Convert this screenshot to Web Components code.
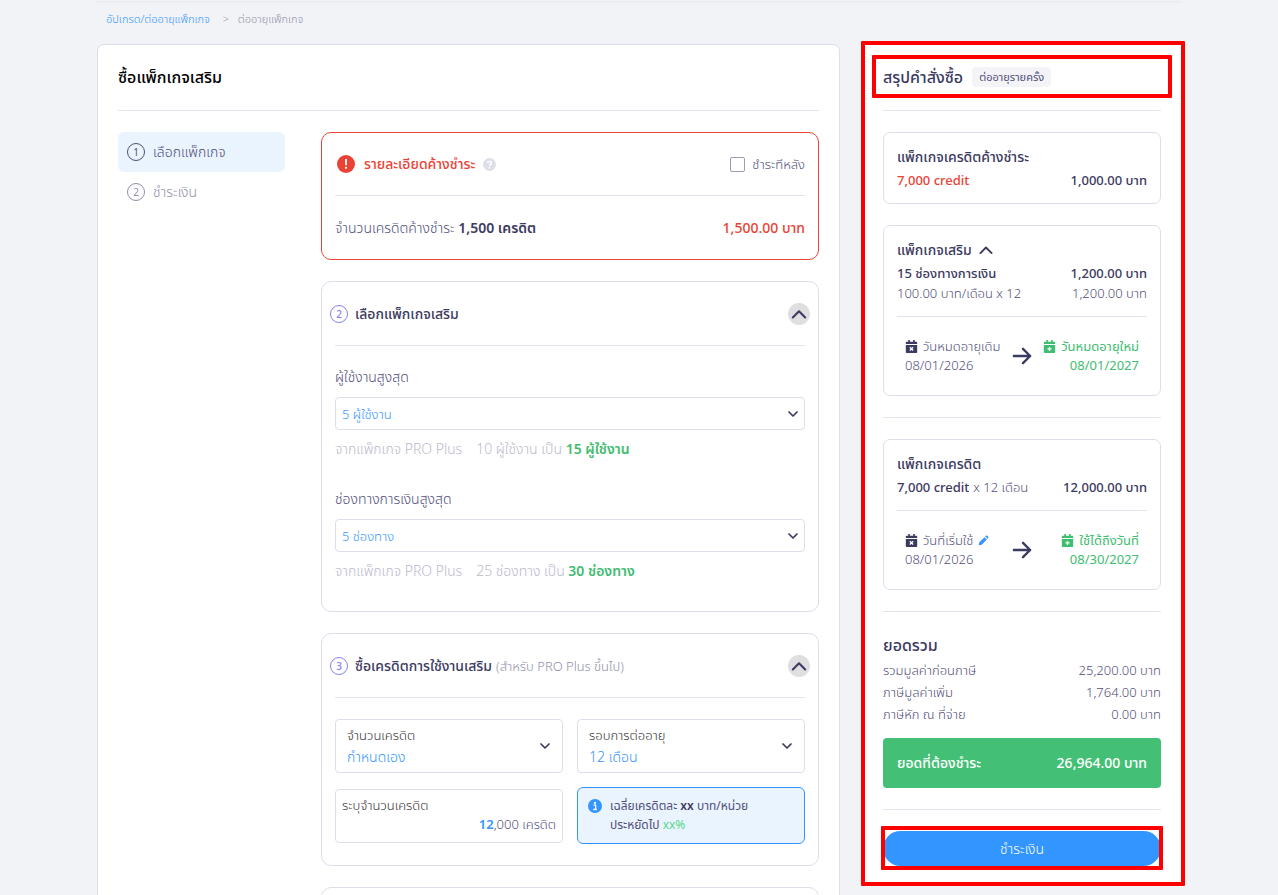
<!DOCTYPE html>
<html lang="th">
<head>
<meta charset="utf-8">
<meta name="viewport" content="width=device-width, initial-scale=1">
<title>ซื้อแพ็กเกจเสริม</title>
<style>
html {
    scrollbar-width: none;
}

body {
    --ink: #3b3a60;
    --soft: #504e78;
    --mute: #9190aa;
    --pale: #bbbacd;
    --line: #dedeea;
    --red: #ea4335;
    --green: #3fbd70;
    --blue: #3395ff;
    margin: 0;
    background: #f2f3f7;
    color: var(--soft);
    font: 300 13px/20px "Noto Sans", "Noto Sans Thai", sans-serif;
}

b {
    color: var(--ink);
    font-weight: 600;
}

.red { color: var(--red); }
.green { color: var(--green); }
b.red { font-weight: 500; }
</style>
</head>
<body>

<checkout-page>
    <crumb-trail slot="crumbs" parent="อัปเกรด/ต่ออายุแพ็กเกจ" current="ต่ออายุแพ็กเกจ"></crumb-trail>

    <main-panel heading="ซื้อแพ็กเกจเสริม">
        <step-item slot="steps" number="1" active>เลือกแพ็กเกจ</step-item>
        <step-item slot="steps" number="2">ชำระเงิน</step-item>

        <due-card heading="รายละเอียดค้างชำระ" option="ชำระทีหลัง">
            <span>จำนวนเครดิตค้างชำระ <b>1,500 เครดิต</b></span>
            <b class="red">1,500.00 บาท</b>
        </due-card>

        <section-card number="2" heading="เลือกแพ็กเกจเสริม">
            <select-field label="ผู้ใช้งานสูงสุด" value="5 ผู้ใช้งาน">
                <span>จากแพ็กเกจ PRO Plus</span>
                <span>10 ผู้ใช้งาน เป็น <b class="green">15 ผู้ใช้งาน</b></span>
            </select-field>
            <select-field label="ช่องทางการเงินสูงสุด" value="5 ช่องทาง">
                <span>จากแพ็กเกจ PRO Plus</span>
                <span>25 ช่องทาง เป็น <b class="green">30 ช่องทาง</b></span>
            </select-field>
        </section-card>

        <section-card number="3" heading="ซื้อเครดิตการใช้งานเสริม" note="(สำหรับ PRO Plus ขึ้นไป)">
            <credit-fields></credit-fields>
        </section-card>

        <section-card></section-card>
    </main-panel>

    <order-summary slot="side" heading="สรุปคำสั่งซื้อ" badge="ต่ออายุรายครั้ง">
        <summary-box heading="แพ็กเกจเครดิตค้างชำระ">
            <summary-line strong><span class="red">7,000 credit</span><span slot="amount">1,000.00 บาท</span></summary-line>
        </summary-box>

        <summary-box heading="แพ็กเกจเสริม" collapsible>
            <summary-line strong>15 ช่องทางการเงิน<span slot="amount">1,200.00 บาท</span></summary-line>
            <summary-line small>100.00 บาท/เดือน x 12<span slot="amount">1,200.00 บาท</span></summary-line>
            <date-range slot="dates" from-label="วันหมดอายุเดิม" from="08/01/2026" to-label="วันหมดอายุใหม่" to="08/01/2027"></date-range>
        </summary-box>

        <soft-rule></soft-rule>

        <summary-box heading="แพ็กเกจเครดิต">
            <summary-line strong>7,000 credit<span slot="note">x 12 เดือน</span><span slot="amount">12,000.00 บาท</span></summary-line>
            <date-range slot="dates" editable from-label="วันที่เริ่มใช้" from="08/01/2026" to-label="ใช้ได้ถึงวันที่" to="08/30/2027"></date-range>
        </summary-box>

        <soft-rule></soft-rule>

        <order-total heading="ยอดรวม" label="ยอดที่ต้องชำระ" amount="26,964.00 บาท">
            <summary-line>รวมมูลค่าก่อนภาษี<span slot="amount">25,200.00 บาท</span></summary-line>
            <summary-line>ภาษีมูลค่าเพิ่ม<span slot="amount">1,764.00 บาท</span></summary-line>
            <summary-line>ภาษีหัก ณ ที่จ่าย<span slot="amount">0.00 บาท</span></summary-line>
        </order-total>
    </order-summary>
</checkout-page>

<script>
const icons = {
    up: '<path d="M3.500 10.500l4.500-4.500 4.500 4.500" fill="none" stroke="currentColor" stroke-width="1.500" stroke-linecap="round" stroke-linejoin="round"/>',
    down: '<path d="M4 6l4 4 4-4" fill="none" stroke="currentColor" stroke-width="1.700" stroke-linecap="round" stroke-linejoin="round"/>',
    arrow: '<path d="M1.500 8h13M8.800 2.300L14.500 8l-5.700 5.700" fill="none" stroke="currentColor" stroke-width="1.900" stroke-linecap="round" stroke-linejoin="round"/>',
    alert: '<circle cx="8" cy="8" r="8" fill="currentColor"/><path d="M8 4.200v4.300" stroke="#fff" stroke-width="1.600" stroke-linecap="round"/><circle cx="8" cy="11.400" r="1" fill="#fff"/>',
    info: '<circle cx="8" cy="8" r="8" fill="currentColor"/><circle cx="8" cy="4.500" r="1.300" fill="#fff"/><path d="M6.200 7h2.500v4.500M6 12h4.200" fill="none" stroke="#fff" stroke-width="1.500"/>',
    help: '<circle cx="8" cy="8" r="8" fill="currentColor"/><path d="M5.700 6.200c.200-2.800 4.800-2.600 4.600.100C10.200 7.800 8 7.800 8 9.500" fill="none" stroke="#fff" stroke-width="1.700"/><circle cx="8" cy="12" r="1.100" fill="#fff"/>',
    pen: '<path d="M1 15l.900-4.300 7.600-7.600 3.400 3.400-7.600 7.600zM10.500 2.100l.900-.900c.600-.600 1.400-.600 2 0l1.400 1.400c.600.600.600 1.400 0 2l-.900.900z" fill="currentColor"/>',
    calx: '<path d="M4 0h2v2h4V0h2v2h2c.600 0 1 .400 1 1v2H1V3c0-.600.400-1 1-1h2zM1 6h14v9c0 .600-.400 1-1 1H2c-.600 0-1-.400-1-1z" fill="currentColor"/><path d="M6 9l4 4M10 9l-4 4" stroke="#fff" stroke-width="1.600"/>',
    calplus: '<path d="M4 0h2v2h4V0h2v2h2c.600 0 1 .400 1 1v2H1V3c0-.600.400-1 1-1h2zM1 6h14v9c0 .600-.400 1-1 1H2c-.600 0-1-.400-1-1z" fill="currentColor"/><path d="M8 8.500v5M5.500 11h5" stroke="#fff" stroke-width="1.600"/>'
};

// shared base: render() gives the markup of the shadow root
class BaseElement extends HTMLElement {
    constructor() {
        super();
        this.attachShadow({mode: 'open'});
    }

    connectedCallback() {
        const template = document.createElement('template');
        template.innerHTML = '<style>*{box-sizing:border-box}</style>' + this.render();
        this.shadowRoot.replaceChildren(template.content.cloneNode(true));
    }

    attr(name) {
        return this.getAttribute(name) || '';
    }
}

class AppIcon extends BaseElement {
    render() {
        return `
<style>
:host { display: inline-flex; flex: none; width: 16px; height: 16px; }
svg { width: 100%; height: 100%; }
</style>
<svg viewBox="0 0 16 16" aria-hidden="true">${icons[this.attr('name')]}</svg>`;
    }
}

class SoftRule extends BaseElement {
    render() {
        return `
<style>
:host { display: block; height: 1px; background: #e3e3ee; }
</style>`;
    }
}

// red frame drawn over the element that holds it
class MarkFrame extends BaseElement {
    render() {
        return `
<style>
:host { position: absolute; inset: -4px; border: 4px solid #f00; border-radius: 1px; pointer-events: none; }
</style>`;
    }
}

class CheckoutPage extends BaseElement {
    render() {
        return `
<style>
:host { display: block; max-width: 1084px; margin: 0 auto; }
.top { height: 1px; box-shadow: 0 0 3px rgba(60, 60, 90, .2); }
.columns { display: grid; grid-template-columns: 1fr 320px; gap: 21px; align-items: start; }
</style>
<div class="top"></div>
<slot name="crumbs"></slot>
<div class="columns">
    <slot></slot>
    <slot name="side"></slot>
</div>`;
    }
}

class CrumbTrail extends BaseElement {
    render() {
        return `
<style>
:host { display: block; padding: 8px 9px 15px; font-size: 11px; color: var(--mute); }
nav { display: flex; }
a { color: var(--blue); text-decoration: none; }
.sep { width: 28px; text-align: center; padding-left: 4px; }
</style>
<nav>
    <a href="#">${this.attr('parent')}</a>
    <span class="sep">&gt;</span>
    <span>${this.attr('current')}</span>
</nav>`;
    }
}

class MainPanel extends BaseElement {
    render() {
        return `
<style>
:host { display: block; box-sizing: border-box; background: #fff; border: 1px solid var(--line); border-radius: 7px; padding: 0 20px 20px; }
h1 { margin: 0; font-size: 16px; line-height: 65px; font-weight: 500; color: #000; }
.body { display: grid; grid-template-columns: 167px 1fr; gap: 36px; padding-top: 21px; }
.cards { display: grid; gap: 21px; }
</style>
<h1>${this.attr('heading')}</h1>
<soft-rule></soft-rule>
<div class="body">
    <div><slot name="steps"></slot></div>
    <div class="cards"><slot></slot></div>
</div>`;
    }
}

class StepItem extends BaseElement {
    render() {
        return `
<style>
:host { display: flex; align-items: center; gap: 8px; height: 40px; padding: 0 9px; border-radius: 6px; font-size: 14px; box-sizing: border-box; color: var(--mute); }
:host([active]) { background: #eaf4ff; color: var(--soft); }
.num { width: 18px; height: 18px; border: 1px solid; border-radius: 50%; font-size: 10px; line-height: 16px; font-weight: 400; text-align: center; }
</style>
<span class="num">${this.attr('number')}</span>
<slot></slot>`;
    }
}

class DueCard extends BaseElement {
    render() {
        return `
<style>
:host { display: block; border: 1px solid var(--red); border-radius: 10px; padding: 0 13px; }
header, .row { display: flex; align-items: center; height: 62px; }
.row { justify-content: space-between; height: 63px; font-size: 14px; }
header { padding-left: 2px; color: var(--red); }
header > app-icon { width: 18px; height: 18px; }
h2 { margin: 0 8px 0 9px; font-size: 14px; font-weight: 500; }
header > .help { width: 13px; height: 13px; color: var(--line); }
label { display: flex; align-items: center; gap: 7px; margin-left: auto; color: var(--soft); }
input { appearance: none; width: 15px; height: 15px; margin: 0; border: 1px solid #9c9bb3; border-radius: 2px; background: #fff; }
</style>
<header>
    <app-icon name="alert"></app-icon>
    <h2>${this.attr('heading')}</h2>
    <app-icon class="help" name="help"></app-icon>
    <label><input type="checkbox">${this.attr('option')}</label>
</header>
<soft-rule></soft-rule>
<div class="row"><slot></slot></div>`;
    }
}

class SectionCard extends BaseElement {
    render() {
        const header = this.hasAttribute('heading') ? `
<header>
    <span class="num">${this.attr('number')}</span>
    <h2>${this.attr('heading')}</h2>
    <span class="note">${this.attr('note')}</span>
    <button type="button" aria-label="ย่อ"><app-icon name="up"></app-icon></button>
</header>
<soft-rule></soft-rule>` : '';
        return `
<style>
:host { display: block; border: 1px solid var(--line); border-radius: 10px; padding: 0 13px 21px; }
header { display: flex; align-items: center; height: 63px; margin: 0 -5px; }
.num { width: 18px; height: 18px; border: 1px solid; border-radius: 50%; font-size: 10px; line-height: 16px; text-align: center; color: #8482f0; font-weight: 500; }
h2 { margin: 0 4px 0 7px; font-size: 14px; font-weight: 500; color: var(--ink); }
.note { color: var(--mute); }
button { display: grid; place-items: center; width: 22px; height: 22px; margin-left: auto; padding: 0; border: 0; border-radius: 50%; background: #dfdfe1; color: var(--ink); }
button app-icon { width: 22px; height: 22px; }
</style>
${header}
<slot></slot>`;
    }
}

class SelectField extends BaseElement {
    render() {
        return `
<style>
:host { display: block; padding: 20px 0 9px; }
label { display: block; font-size: 14px; line-height: 22px; margin-bottom: 9px; }
.box { display: grid; align-items: center; color: var(--ink); }
.box > * { grid-area: 1 / 1; }
.box app-icon { justify-self: end; margin-right: 4px; pointer-events: none; }
select { appearance: none; width: 100%; height: 33px; padding: 0 6px; border: 1px solid var(--line); border-radius: 4px; background: #fff; color: var(--blue); font: inherit; }
.hint { display: flex; gap: 14px; margin-top: 9px; font-size: 14px; color: var(--pale); }
</style>
<label for="field">${this.attr('label')}</label>
<div class="box">
    <select id="field"><option>${this.attr('value')}</option></select>
    <app-icon name="down"></app-icon>
</div>
<div class="hint"><slot></slot></div>`;
    }
}

class CreditFields extends BaseElement {
    render() {
        return `
<style>
:host { display: grid; grid-template-columns: 1fr 1fr; gap: 14px; padding-top: 21px; align-items: center; }
.field { display: flex; flex-direction: column; justify-content: center; height: 54px; border: 1px solid var(--line); border-radius: 4px; color: #333; line-height: 19px; }
.pick { display: grid; grid-template-columns: 1fr 16px; align-content: center; align-items: center; padding: 0 9px 0 11px; color: var(--ink); }
.pick label { color: #333; line-height: 22px; }
.pick select { grid-row: 2; grid-column: 1; }
.pick app-icon { grid-row: 1 / 3; grid-column: 2; }
select { appearance: none; border: 0; padding: 0; background: none; color: var(--blue); font: inherit; font-size: 14px; line-height: 22px; }
.amount { padding: 0 6px 2px; }
.amount div { display: flex; justify-content: flex-end; color: var(--soft); }
input { width: 60px; padding: 0; border: 0; text-align: right; font: inherit; font-weight: 600; color: var(--blue); }
.tip { display: flex; gap: 8px; min-height: 57px; padding: 8px 10px; border: 1px solid var(--blue); border-radius: 6px; background: #eaf4ff; font-size: 12px; font-weight: 400; line-height: 19px; }
.tip app-icon { width: 14px; height: 14px; margin-top: 3px; color: var(--blue); }
b { color: var(--ink); font-weight: 600; }
.ok { color: #58d68d; }
</style>
<div class="field pick">
    <label for="credit">จำนวนเครดิต</label>
    <select id="credit"><option>กำหนดเอง</option></select>
    <app-icon name="down"></app-icon>
</div>
<div class="field pick">
    <label for="cycle">รอบการต่ออายุ</label>
    <select id="cycle"><option>12 เดือน</option></select>
    <app-icon name="down"></app-icon>
</div>
<div class="field amount">
    <label for="amount">ระบุจำนวนเครดิต</label>
    <div><input id="amount" value="12"><span>,000 เครดิต</span></div>
</div>
<div class="tip">
    <app-icon name="info"></app-icon>
    <div>เฉลี่ยเครดิตละ <b>xx</b> บาท/หน่วย<br>ประหยัดไป <span class="ok">xx%</span></div>
</div>`;
    }
}

class OrderSummary extends BaseElement {
    render() {
        return `
<style>
:host { display: grid; gap: 21px; position: relative; box-sizing: border-box; padding: 0 20px 19px 22px; background: #fff; }
.outer { inset: -3px -4px -1px 0; }
.head { display: flex; align-items: center; gap: 9px; height: 66px; margin-bottom: -21px; position: relative; }
.head mark-frame { inset: 11px -11px 12px; }
h2 { margin: 0; font-size: 16px; font-weight: 500; color: var(--ink); }
.badge { padding: 0 7px; border-radius: 4px; background: #f4f4f8; font-size: 11px; font-weight: 400; }
.pay { position: relative; display: grid; }
.pay mark-frame { inset: -5px -2px -4px; }
button { height: 35px; border: 0; border-radius: 18px; background: var(--blue); color: #fff; font: inherit; font-size: 14px; }
</style>
<div class="head">
    <h2>${this.attr('heading')}</h2>
    <span class="badge">${this.attr('badge')}</span>
    <mark-frame></mark-frame>
</div>
<soft-rule></soft-rule>
<slot></slot>
<soft-rule></soft-rule>
<div class="pay">
    <button type="button">ชำระเงิน</button>
    <mark-frame></mark-frame>
</div>
<mark-frame class="outer"></mark-frame>`;
    }
}

class SummaryBox extends BaseElement {
    render() {
        const toggle = this.hasAttribute('collapsible')
            ? '<button type="button" aria-label="ย่อ"><app-icon name="up"></app-icon></button>' : '';
        return `
<style>
:host { display: block; border: 1px solid var(--line); border-radius: 7px; padding: 12px 13px; }
.head { display: flex; align-items: center; gap: 4px; height: 24px; }
h3 { margin: 0; font-size: 14px; font-weight: 500; color: var(--ink); }
button { display: flex; padding: 0; border: 0; background: none; color: var(--ink); }
button app-icon { width: 20px; height: 20px; }
</style>
<div class="head"><h3>${this.attr('heading')}</h3>${toggle}</div>
<slot></slot>
<slot name="dates"></slot>`;
    }
}

class SummaryLine extends BaseElement {
    render() {
        return `
<style>
:host { display: flex; line-height: 22px; }
:host([small]) { line-height: 18px; padding-bottom: 2px; }
:host([strong]) { color: var(--ink); font-weight: 500; }
slot[name="note"] { display: block; margin-left: 4px; color: var(--soft); font-weight: 300; }
slot[name="amount"] { display: block; margin-left: auto; }
</style>
<span><slot></slot></span>
<slot name="note"></slot>
<slot name="amount"></slot>`;
    }
}

class DateRange extends BaseElement {
    render() {
        const edit = this.hasAttribute('editable')
            ? '<button type="button" aria-label="แก้ไข"><app-icon name="pen"></app-icon></button>' : '';
        return `
<style>
:host { display: block; padding-top: 12px; line-height: 19px; }
.dates { display: grid; grid-template-columns: 1fr auto 1fr; align-items: center; padding: 20px 8px 8px; }
.title { display: flex; align-items: center; gap: 5px; white-space: nowrap; }
.title app-icon { width: 13px; height: 13px; }
.from .title > app-icon { color: var(--ink); }
.to { color: var(--green); text-align: right; font-weight: 400; }
.to .title { justify-content: flex-end; }
.arrow { width: 20px; height: 20px; color: var(--ink); }
button { display: flex; padding: 0; border: 0; background: none; color: var(--blue); }
.title button app-icon { width: 11px; height: 11px; }
</style>
<soft-rule></soft-rule>
<div class="dates">
    <div class="from">
        <div class="title"><app-icon name="calx"></app-icon>${this.attr('from-label')}${edit}</div>
        ${this.attr('from')}
    </div>
    <app-icon class="arrow" name="arrow"></app-icon>
    <div class="to">
        <div class="title"><app-icon name="calplus"></app-icon>${this.attr('to-label')}</div>
        ${this.attr('to')}
    </div>
</div>`;
    }
}

class OrderTotal extends BaseElement {
    render() {
        return `
<style>
:host { display: block; }
h3 { margin: 0 0 2px; font-size: 16px; line-height: 24px; font-weight: 500; color: var(--ink); }
.due { display: flex; justify-content: space-between; align-items: center; height: 50px; margin-top: 13px; padding: 0 14px; border-radius: 4px; background: #44bf76; color: #fff; font-size: 14px; font-weight: 500; }
</style>
<h3>${this.attr('heading')}</h3>
<slot></slot>
<div class="due"><span>${this.attr('label')}</span><span>${this.attr('amount')}</span></div>`;
    }
}

window.customElements.define('app-icon', AppIcon);
window.customElements.define('soft-rule', SoftRule);
window.customElements.define('mark-frame', MarkFrame);
window.customElements.define('checkout-page', CheckoutPage);
window.customElements.define('crumb-trail', CrumbTrail);
window.customElements.define('main-panel', MainPanel);
window.customElements.define('step-item', StepItem);
window.customElements.define('due-card', DueCard);
window.customElements.define('section-card', SectionCard);
window.customElements.define('select-field', SelectField);
window.customElements.define('credit-fields', CreditFields);
window.customElements.define('order-summary', OrderSummary);
window.customElements.define('summary-box', SummaryBox);
window.customElements.define('summary-line', SummaryLine);
window.customElements.define('date-range', DateRange);
window.customElements.define('order-total', OrderTotal);
</script>
</body>
</html>
